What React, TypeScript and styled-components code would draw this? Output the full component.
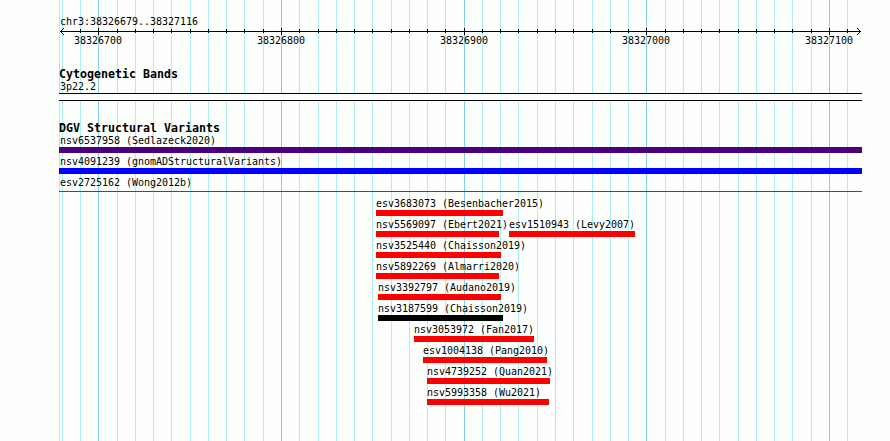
import React, { FC } from 'react'
import styled, { createGlobalStyle } from 'styled-components'

const GlobalStyle = createGlobalStyle`
  body {
    margin: 0;
    background: #fdfffc;
  }
`

const PANEL_LEFT = 59
const PANEL_WIDTH = 803
const HEIGHT = 441

type FeatureType = {
  name: string
  start: number
  end: number
  color?: string
  thin?: boolean
}

const gridLines = [
  59, 62, 80, 98, 117, 135, 153, 171, 190, 208, 226, 244, 263, 281, 299, 318, 336, 354, 372, 391, 409, 427, 445, 464,
  482, 500, 518, 537, 555, 573, 592, 610, 628, 646, 665, 683, 701, 719, 738, 756, 774, 792, 811, 829, 847,
]

const majorTicks = [
  { x: 98, label: '38326700' },
  { x: 281, label: '38326800' },
  { x: 464, label: '38326900' },
  { x: 646, label: '38327000' },
  { x: 829, label: '38327100' },
]

const isMajor = (x: number) => majorTicks.some((tick) => tick.x === x)

const rows: FeatureType[][] = [
  [{ name: 'nsv6537958 (Sedlazeck2020)', start: 59, end: 862, color: '#4b0082' }],
  [{ name: 'nsv4091239 (gnomADStructuralVariants)', start: 59, end: 862, color: '#0000ff' }],
  [{ name: 'esv2725162 (Wong2012b)', start: 59, end: 862, thin: true }],
  [{ name: 'esv3683073 (Besenbacher2015)', start: 376, end: 503 }],
  [
    { name: 'nsv5569097 (Ebert2021)', start: 376, end: 499 },
    { name: 'esv1510943 (Levy2007)', start: 509, end: 635 },
  ],
  [{ name: 'nsv3525440 (Chaisson2019)', start: 376, end: 501 }],
  [{ name: 'nsv5892269 (Almarri2020)', start: 376, end: 499 }],
  [{ name: 'nsv3392797 (Audano2019)', start: 378, end: 501 }],
  [{ name: 'nsv3187599 (Chaisson2019)', start: 378, end: 503, color: '#000000' }],
  [{ name: 'nsv3053972 (Fan2017)', start: 414, end: 534 }],
  [{ name: 'esv1004138 (Pang2010)', start: 423, end: 547 }],
  [{ name: 'nsv4739252 (Quan2021)', start: 427, end: 550 }],
  [{ name: 'nsv5993358 (Wu2021)', start: 427, end: 549 }],
]

const Browser = styled.div`
  position: relative;
  width: 890px;
  height: ${HEIGHT}px;
  overflow: hidden;
  color: #000;
  font-family: 'DejaVu Sans Mono', 'Liberation Mono', monospace;
  font-size: 10px;
  letter-spacing: -0.02px;
  line-height: 13px;
`
const GridLayer = styled.svg`
  position: absolute;
  top: 0;
  left: 0;
`
const Panel = styled.div`
  position: relative;
  width: ${PANEL_WIDTH}px;
  margin-left: ${PANEL_LEFT}px;
  padding-top: 15px;
`
const Label = styled.div<{ $indent?: number }>`
  height: 13px;
  padding-left: ${({ $indent = 0 }) => $indent}px;
  white-space: pre;
`
const Ruler = styled.svg`
  display: block;
  overflow: visible;
`
const TickLabels = styled.div`
  display: flex;
  height: 34px;
  margin-top: -1px;
  padding-left: 15px;
`
const TickLabel = styled.span<{ $gap: number }>`
  width: 48px;
  margin-left: ${({ $gap }) => $gap}px;
`
const Title = styled.div`
  height: 12px;
  font-size: 11.63px;
  font-weight: bold;
  letter-spacing: 0;
  white-space: pre;
`
const Band = styled.div`
  height: 6px;
  background: #fdfffc;
  border: solid #000;
  border-width: 1px 0;
  margin-bottom: 21px;
`
const Row = styled.div`
  display: flex;
  height: 21px;
`
const FeatureBox = styled.div<{ $gap: number; $width: number }>`
  flex: none;
  width: ${({ $width }) => $width}px;
  margin-left: ${({ $gap }) => $gap}px;
`
const Bar = styled.div<{ $color: string; $thin?: boolean }>`
  height: ${({ $thin }) => ($thin ? 1 : 6)}px;
  margin-top: ${({ $thin }) => ($thin ? 2 : 0)}px;
  background: ${({ $color }) => $color};
`

const Grid: FC = () => (
  <GridLayer width="890" height={HEIGHT} shapeRendering="crispEdges">
    {gridLines.map((x) => (
      <rect key={x} x={x} y="0" width="1" height={HEIGHT} fill={isMajor(x) ? '#87ceeb' : '#afeeee'} />
    ))}
  </GridLayer>
)

const Scale: FC = () => (
  <>
    <Ruler width={PANEL_WIDTH} height="7" viewBox={`${PANEL_LEFT} 28 ${PANEL_WIDTH} 7`} shapeRendering="crispEdges">
      <rect x="60" y="31" width="801" height="1" />
      {gridLines.slice(2).map((x) => (
        <rect key={x} x={x} y={isMajor(x) ? 28 : 29} width="1" height={isMajor(x) ? 7 : 4} />
      ))}
      {[1, 2, 3].map((i) => (
        <React.Fragment key={i}>
          <rect x={60 + i} y={31 - i} width="1" height="1" />
          <rect x={60 + i} y={31 + i} width="1" height="1" />
          <rect x={860 - i} y={31 - i} width="1" height="1" />
          <rect x={860 - i} y={31 + i} width="1" height="1" />
        </React.Fragment>
      ))}
    </Ruler>
    <TickLabels>
      {majorTicks.map(({ x, label }, index) => (
        <TickLabel key={label} $gap={index ? x - majorTicks[index - 1].x - 48 : 0}>
          {label}
        </TickLabel>
      ))}
    </TickLabels>
  </>
)

const Feature: FC<FeatureType & { previousEnd: number }> = ({
  name,
  start,
  end,
  color = '#ff0000',
  thin,
  previousEnd,
}) => (
  <FeatureBox $gap={start - previousEnd} $width={end - start}>
    <Label $indent={start === PANEL_LEFT ? 1 : 0}>{name}</Label>
    <Bar $color={color} $thin={thin} />
  </FeatureBox>
)

const App: FC = () => (
  <Browser>
    <GlobalStyle />
    <Grid />
    <Panel>
      <Label $indent={1}>chr3:38326679..38327116</Label>
      <Scale />
      <Title>Cytogenetic Bands</Title>
      <Label $indent={1}>3p22.2</Label>
      <Band />
      <Title>DGV Structural Variants</Title>
      {rows.map((row) => (
        <Row key={row[0].name}>
          {row.map((feature, index) => (
            <Feature key={feature.name} {...feature} previousEnd={index ? row[index - 1].end : PANEL_LEFT} />
          ))}
        </Row>
      ))}
    </Panel>
  </Browser>
)

export default App
